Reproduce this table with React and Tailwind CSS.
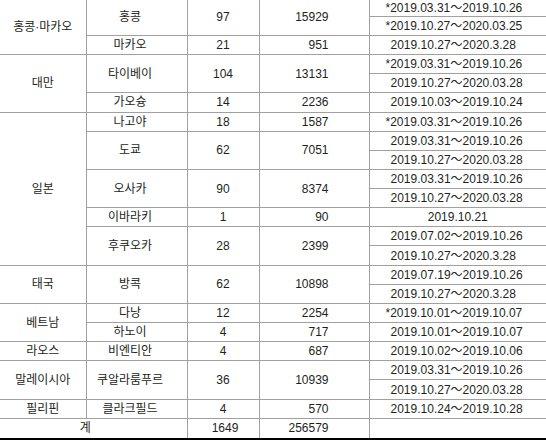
import React from "react";

const D = (t, kind = "date") => ({ t, col: kind });

const rows = [
  [
    { t: "홍콩·마카오", col: 1, rs: 3 },
    { t: "홍콩", col: 2, rs: 2 },
    { t: "97", col: 3, rs: 2 },
    { t: "15929", col: 4, rs: 2 },
    D("*2019.03.31～2019.10.26", "star"),
  ],
  [D("*2019.10.27～2020.03.25", "star")],
  [{ t: "마카오", col: 2 }, { t: "21", col: 3 }, { t: "951", col: 4 }, D("2019.10.27～2020.3.28")],
  [
    { t: "대만", col: 1, rs: 3 },
    { t: "타이베이", col: 2, rs: 2 },
    { t: "104", col: 3, rs: 2 },
    { t: "13131", col: 4, rs: 2 },
    D("*2019.03.31～2019.10.26", "star"),
  ],
  [D("2019.10.27～2020.03.28")],
  [{ t: "가오슝", col: 2 }, { t: "14", col: 3 }, { t: "2236", col: 4 }, D("2019.10.03～2019.10.24")],
  [
    { t: "일본", col: 1, rs: 8 },
    { t: "나고야", col: 2 },
    { t: "18", col: 3 },
    { t: "1587", col: 4 },
    D("*2019.03.31～2019.10.26", "star"),
  ],
  [{ t: "도쿄", col: 2, rs: 2 }, { t: "62", col: 3, rs: 2 }, { t: "7051", col: 4, rs: 2 }, D("2019.03.31～2019.10.26")],
  [D("2019.10.27～2020.03.28")],
  [{ t: "오사카", col: 2, rs: 2 }, { t: "90", col: 3, rs: 2 }, { t: "8374", col: 4, rs: 2 }, D("2019.03.31～2019.10.26")],
  [D("2019.10.27～2020.03.28")],
  [{ t: "이바라키", col: 2 }, { t: "1", col: 3 }, { t: "90", col: 4 }, D("2019.10.21", "center")],
  [{ t: "후쿠오카", col: 2, rs: 2 }, { t: "28", col: 3, rs: 2 }, { t: "2399", col: 4, rs: 2 }, D("2019.07.02～2019.10.26")],
  [D("2019.10.27～2020.3.28")],
  [
    { t: "태국", col: 1, rs: 2 },
    { t: "방콕", col: 2, rs: 2 },
    { t: "62", col: 3, rs: 2 },
    { t: "10898", col: 4, rs: 2 },
    D("2019.07.19～2019.10.26"),
  ],
  [D("2019.10.27～2020.3.28")],
  [
    { t: "베트남", col: 1, rs: 2 },
    { t: "다낭", col: 2 },
    { t: "12", col: 3 },
    { t: "2254", col: 4 },
    D("*2019.10.01～2019.10.07", "star"),
  ],
  [{ t: "하노이", col: 2 }, { t: "4", col: 3 }, { t: "717", col: 4 }, D("2019.10.01～2019.10.07")],
  [{ t: "라오스", col: 1 }, { t: "비엔티안", col: 2 }, { t: "4", col: 3 }, { t: "687", col: 4 }, D("2019.10.02～2019.10.06")],
  [
    { t: "말레이시아", col: 1, rs: 2 },
    { t: "쿠알라룸푸르", col: 2, rs: 2 },
    { t: "36", col: 3, rs: 2 },
    { t: "10939", col: 4, rs: 2 },
    D("2019.03.31～2019.10.26"),
  ],
  [D("2019.10.27～2020.03.28")],
  [{ t: "필리핀", col: 1 }, { t: "클라크필드", col: 2 }, { t: "4", col: 3 }, { t: "570", col: 4 }, D("2019.10.24～2019.10.28")],
];

const colCls = {
  1: "text-center",
  2: "border-l text-center pr-[13px]",
  3: "border-l text-center",
  4: "border-l text-right pr-[40px]",
  date: "border-l text-left pl-[21px]",
  star: "border-l text-left pl-[16px]",
  center: "border-l text-center",
};

const base =
  "p-0 border-b border-[#a0a0a0] align-middle whitespace-nowrap";

export default function App() {
  return (
    <div className="w-[546px] h-[444px] bg-white overflow-hidden font-[family-name:'Liberation_Sans','Noto_Sans_CJK_KR',sans-serif] text-[12px] leading-[14px] text-[#231f20]">
      <table className="w-[546px] table-fixed border-collapse">
        <colgroup>
          <col className="w-[86px]" />
          <col className="w-[101px]" />
          <col className="w-[72px]" />
          <col className="w-[110px]" />
          <col className="w-[177px]" />
        </colgroup>
        <tbody>
          {rows.map((r, i) => (
            <tr key={i} className={i === 0 ? "h-[16.3px]" : "h-[19.15px]"}>
              {r.map((c, j) => (
                <td key={j} rowSpan={c.rs || 1} className={`${base} ${colCls[c.col]}`}>
                  {c.t}
                </td>
              ))}
            </tr>
          ))}
          <tr className="h-[20.5px]">
            <td colSpan={2} className="p-0 border-b-2 border-b-black text-center pr-[16px] align-middle">
              계
            </td>
            <td className="p-0 border-b-2 border-b-black border-l border-l-[#a0a0a0] text-center pl-[4px] align-middle">
              1649
            </td>
            <td className="p-0 border-b-2 border-b-black border-l border-l-[#a0a0a0] text-right pr-[40px] align-middle">
              256579
            </td>
            <td className="p-0 border-b-2 border-b-black border-l border-l-[#a0a0a0]"></td>
          </tr>
        </tbody>
      </table>
    </div>
  );
}
